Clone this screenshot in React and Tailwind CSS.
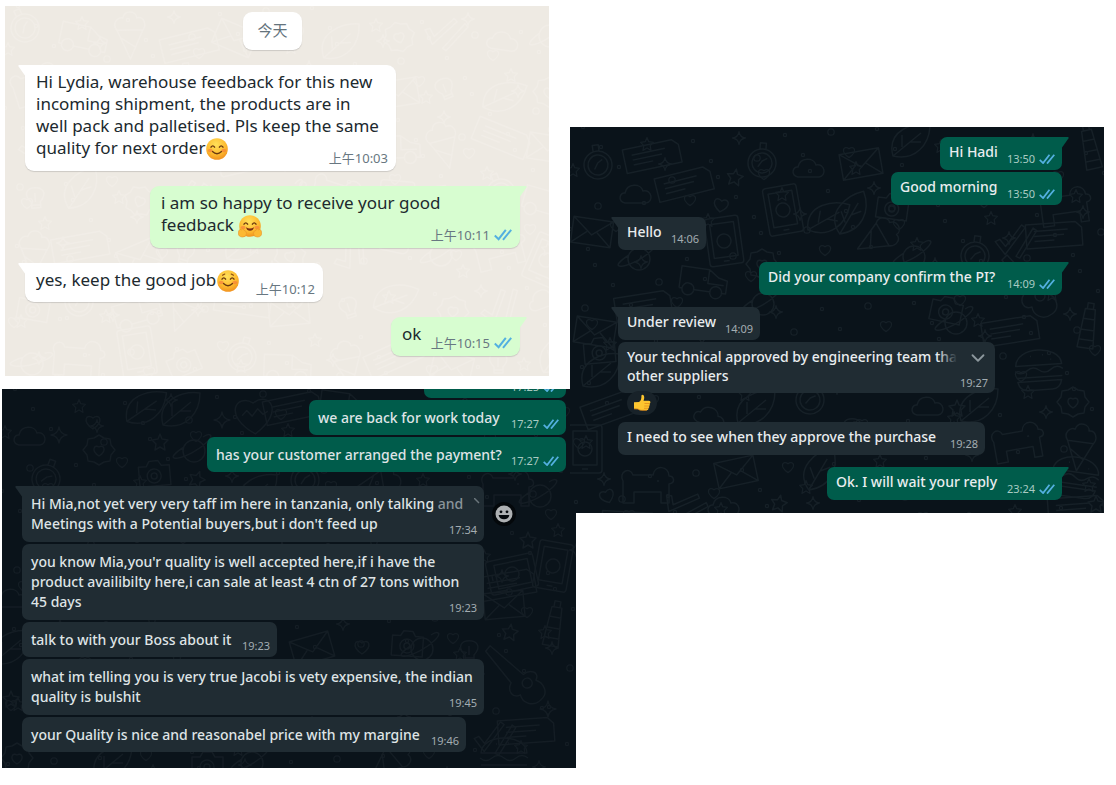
import { ChevronDown } from "lucide-react";

// Outline drawings for the chat wallpaper, each centred on 0,0
const SHAPES = {
  ring: <circle r="4" />,
  dot: <circle r="2" />,
  star: <path d="M0-8 2-3 8-2 4 2 5 8 0 5-5 8-4 2-8-2-2-3Z" />,
  spark: <path d="M0-8Q1-1 8 0 1 1 0 8-1 1-8 0-1-1 0-8Z" />,
  heart: <path d="M0 7C-12-1-6-9 0-4 6-9 12-1 0 7Z" />,
  bigHeart: <path d="M0 20C-32-1-16-22 0-11 16-22 32-1 0 20ZM-12 1l5-5 5 6 6-7 5 6 5-3" />,
  watch: <path d="M-14 0a14 14 0 1 0 28 0a14 14 0 1 0-28 0M-10 0a10 10 0 1 0 20 0a10 10 0 1 0-20 0M-3-14v-6h6v6M-4 4 0-2 5-5" />,
  note: <path d="M-28-11h50l6 6v18h-56ZM-20-4h34M-20 1h30M-20 6h20" />,
  phone: <path d="M-14-24h28q3 0 3 3v42q0 3-3 3h-28q-3 0-3-3v-42q0-3 3-3ZM-12-18h24v34h-24ZM-7 0a7 7 0 1 0 14 0a7 7 0 1 0-14 0M-3 20h6" />,
  cloud: <path d="M-12 8c-8-2-5-11 0-10C-10-12 4-12 6-4c9-2 11 11 3 12Z" />,
  gear: <path d="M0-15 5-12 11-11 12-5 16 0 12 5 11 11 5 12 0 15-5 12-11 11-12 5-16 0-12-5-11-11-5-12ZM0 6C-9 0-4-6 0-3 4-6 9 0 0 6Z" />,
  camera: <path d="M-15-8h8l3-5h9l3 5h8v20h-31ZM-7 2a7 7 0 1 0 14 0a7 7 0 1 0-14 0M-3 2a3 3 0 1 0 6 0a3 3 0 1 0-6 0" />,
  burger: <path d="M-23-5C-22-25 22-25 23-5ZM-24 0q6 5 12 0t12 0 12 0 12 0M-23 7h46M-22 11q2 9 10 9h24q8 0 10-9ZM-8-14h1M4-15h1M12-10h1" />,
  ticks: <path d="M-19 6l4-3 7 6L4-15l4 2L-7 17ZM4 17 16-14l4 2L8 18Z" />,
  truck: <path d="M-24 9v-22h28l10 7 9 2v13h-5M-10 9H8M-24 9h3M-21 9a6 6 0 1 0 12 0a6 6 0 1 0-12 0M7 9a6 6 0 1 0 12 0a6 6 0 1 0-12 0M4-13v14h16" />,
  letter: <path d="M-20-13h40v26h-40ZM-20-13 0 3 20-13M-20 13-5 0M20 13 5 0" />,
  leaf: <path d="M-17 14C-24-12 4-20 20-18 20 3 5 19-17 14ZM-17 14 11-9M-8 5v-12M0 0h11" />,
  guitar: <path d="M-30-24l5-5 30 32c7-5 17-1 12 7 7 3 12 14 3 20-9 7-19 1-20-7-8 3-13-5-8-13ZM3 12a5 5 0 1 0 10 0a5 5 0 1 0-10 0" />,
  cone: <path d="M-13-3 0 26 13-3ZM-13-3c-6-7 2-14 6-12 2-9 14-7 14 0 7-2 10 7 6 12M-9 5l14 9" />,
  planet: <path d="M-11 0a11 11 0 1 0 22 0a11 11 0 1 0-22 0M-10-4c-28 18 5 13 23-5 8-8 2-9-4-5" />,
  bulb: <path d="M-4 12v-6c-18-19 26-19 9 0v6ZM-4 9h9M0 6v-9" />,
  dog: <path d="M-24 18v-22c-5-9 7-15 10-6h20c2-11 16-9 16 1 5 0 7 7 0 8v19h-8v-11h-27v11ZM10-4h2" />,
  tower: <path d="M-8 22-5-17h10L8 22ZM-6-7H6M-7 4H7M-8 14H8M-3-17v-6h6v6" />,
};

const KINDS = ["watch", "note", "leaf", "cloud", "phone", "truck", "letter", "gear", "planet", "camera", "cone", "bulb", "ticks", "dog"];

const RIGHT_ART = [
  ["watch", 28, 38, -8], ["note", 82, 28, -12], ["note", 114, 56, -14], ["cloud", 67, 68, 0], ["star", 165, 50, 10],
  ["watch", 192, 36, 4], ["cloud", 240, 42, 0], ["phone", 213, 83, -10], ["leaf", 257, 92, 10], ["heart", 151, 78, 10],
  ["phone", 154, 114, -8], ["letter", 22, 105, 8], ["planet", 69, 132, 0], ["gear", 192, 137, 0], ["truck", 134, 155, 8],
  ["note", 73, 178, -9], ["planet", 193, 177, 0], ["letter", 291, 37, -10], ["ticks", 445, 112, 10], ["note", 484, 107, -4],
  ["leaf", 281, 88, -20], ["camera", 322, 80, 8], ["cone", 310, 109, 60], ["planet", 344, 130, 0], ["watch", 405, 129, 8],
  ["dog", 495, 79, -8], ["camera", 376, 183, 12], ["guitar", 462, 157, 0], ["planet", 386, 196, 0], ["note", 440, 203, -9],
  ["tower", 518, 199, 8], ["burger", 469, 243, -4], ["gear", 503, 275, 0], ["cone", 510, 318, 8], ["dog", 448, 315, -10],
  ["leaf", 408, 280, 0], ["cloud", 359, 280, 0], ["star", 387, 281, 0], ["letter", 25, 205, 9], ["camera", 29, 224, -5],
  ["leaf", 30, 245, 0], ["note", 40, 281, -20], ["cloud", 141, 291, 20], ["leaf", 185, 282, 0], ["watch", 240, 273, 8],
  ["dog", 77, 358, 0], ["letter", 166, 345, -12], ["leaf", 250, 344, -20], ["heart", 37, 369, -20], ["phone", 15, 322, 0],
  ["ticks", 115, 376, 40], ["cloud", 155, 380, 0], ["star", 209, 376, 12], ["bulb", 282, 300, 0], ["note", 60, 396, 3],
  ["burger", 505, 350, 8], ["note", 506, 381, -4], ["star", 526, 377, 0], ["tower", 520, 20, -12], ["leaf", 340, 15, 0],
];

const LEFT_ART = [
  ["bigHeart", 252, 25, -4], ["leaf", 143, 20, 5], ["gear", 97, 61, 0], ["camera", 152, 85, -5], ["cloud", 29, 48, 0],
  ["spark", 57, 46, 0], ["planet", 192, 62, 0], ["star", 158, 53, 0], ["watch", 44, 90, 20], ["heart", 91, 33, 0],
  ["spark", 220, 31, 0], ["star", 195, 90, 20], ["leaf", 178, 22, 0], ["note", 290, 18, -12], ["truck", 342, 17, 8],
  ["planet", 538, 107, 0], ["dog", 505, 99, 0], ["cone", 378, 95, 80], ["watch", 303, 91, 0], ["leaf", 255, 104, 0],
  ["phone", 510, 185, 78], ["phone", 551, 177, 10], ["note", 505, 195, -10], ["star", 526, 151, 0], ["letter", 502, 216, -5],
  ["letter", 310, 260, -16], ["camera", 405, 255, 4], ["planet", 420, 260, 0], ["guitar", 516, 283, -6], ["star", 508, 243, 8],
  ["note", 524, 341, -4], ["ticks", 492, 347, 10], ["burger", 502, 369, 0], ["gear", 15, 369, 0], ["leaf", 110, 374, 0],
  ["camera", 205, 376, 0], ["planet", 250, 374, 0], ["cone", 390, 370, 50], ["cloud", 11, 210, 0], ["star", 9, 310, 0],
  ["tower", 552, 235, 10], ["spark", 546, 320, 0], ["bulb", 467, 260, 0], ["heart", 360, 258, 0], ["leaf", 8, 260, 0],
];

// Evenly spread drawings for the light wallpaper
const LIGHT_ART = Array.from({ length: 77 }, (_, i) => [
  KINDS[(i * 5) % KINDS.length],
  20 + (i % 11) * 52 + ((i * 7) % 13),
  22 + Math.floor(i / 11) * 54 + ((i * 11) % 17),
  ((i * 37) % 50) - 25,
]);

const SMALL_KINDS = ["dot", "ring", "dot", "spark", "dot", "star", "dot", "heart"];

const SMALL_ART = Array.from({ length: 220 }, (_, i) => [
  SMALL_KINDS[i % 8],
  (i * 89 + 13) % 577,
  (i * 53 + Math.floor(i / 7) * 17) % 391,
]);

function Wallpaper({ art, className }) {
  return (
    <svg
      aria-hidden="true"
      className={`absolute inset-0 h-full w-full ${className}`}
      fill="none"
      stroke="currentColor"
      strokeLinejoin="round"
    >
      {art.map(([kind, x, y, turn], i) => (
        <g key={i} transform={`translate(${x} ${y}) rotate(${turn})`} strokeWidth="1.5">
          {SHAPES[kind]}
        </g>
      ))}
      {SMALL_ART.map(([kind, x, y], i) => (
        <g key={i} transform={`translate(${x} ${y}) scale(.8)`} strokeWidth="1.6">
          {SHAPES[kind]}
        </g>
      ))}
    </svg>
  );
}

function Ticks({ className = "w-4" }) {
  return (
    <svg viewBox="0 0 18 12" className={`shrink-0 ${className}`} fill="none" stroke="#53b0e0" strokeWidth="2" aria-label="Read">
      <path d="M.8 6.6 4.6 10.2 11.8.8M9 10.8 17.2.8" />
    </svg>
  );
}

function Face({ kind }) {
  return (
    <svg viewBox="0 0 24 24" className="-my-1 inline-block size-6 align-middle" aria-label={kind}>
      <defs>
        <radialGradient id={`face-${kind}`} cx="45%" cy="30%" r="75%">
          <stop offset="0" stopColor="#ffe15a" />
          <stop offset=".6" stopColor="#fdbb30" />
          <stop offset="1" stopColor="#ef8a1c" />
        </radialGradient>
      </defs>
      <circle cx="12" cy="12" r="10.8" fill={`url(#face-${kind})`} />
      <g fill="none" stroke="#6b3a10" strokeWidth="1.4" strokeLinecap="round">
        <path d="M6 10.2q1.8-2.6 3.6 0M14.4 10.2q1.8-2.6 3.6 0" />
        {kind !== "hugging" && <path d="M7.5 14.6q4.5 4.4 9 0" />}
      </g>
      <g fill="#f5713d" opacity=".55">
        <ellipse cx="5.2" cy="13.5" rx="2.4" ry="1.7" />
        <ellipse cx="18.8" cy="13.5" rx="2.4" ry="1.7" />
      </g>
      {kind === "relaxed" && (
        <path d="M6.5 6.2 8.8 5M17.5 6.2 15.2 5" stroke="#8a4b12" strokeWidth="1.1" strokeLinecap="round" />
      )}
      {kind === "hugging" && (
        <>
          <path d="M8 13.2q4 2.8 8 0-.8 3.6-4 3.6t-4-3.6Z" fill="#7a2d12" />
          <path d="M1 16.5q1-2 2.4-.6l1-.9q1.6-.4 1.5 1.2 2.6.6 2.6 3.2 0 3.6-3.8 3.6-4.4 0-4.4-4 0-1.4.7-2.5ZM23 16.5q-1-2-2.4-.6l-1-.9q-1.6-.4-1.5 1.2-2.6.6-2.6 3.2 0 3.6 3.8 3.6 4.4 0 4.4-4 0-1.4-.7-2.5Z" fill="#fcb832" stroke="#e8922a" strokeWidth=".6" />
        </>
      )}
    </svg>
  );
}

function ThumbsUp() {
  return (
    <svg viewBox="0 0 18 18" className="size-[18px]" aria-label="thumbs up">
      <path d="M1 8.2 6 8C8 6.6 8.6 4.4 8.4 1.4 9.4.2 11 .9 11.2 3c.1 1.6-.3 2.8-.7 3.8H16q1.6.2 1.4 1.6-.1 1-.9 1.3 1 1.5-.4 2.4.6 1.5-.7 2.2.2 1.8-1.5 2H8.5Q6.5 16.3 5 15L1 14.8Z" fill="#fdc52f" />
      <path d="M11.5 9.5h5M11.3 12h4.9M11 14.3h4.3M1 14.8l4 .2q1.5 1.3 3.5 1.3h5.4" fill="none" stroke="#e08c1b" strokeWidth=".8" />
    </svg>
  );
}

function Tail({ out }) {
  return (
    <svg
      viewBox="0 0 8 13"
      className={`absolute top-0 h-[13px] w-2 ${out ? "-right-[7px] -scale-x-100" : "-left-[7px]"}`}
      fill="currentColor"
      aria-hidden="true"
    >
      <path d="M8 0H1.2Q-.2.3.6 1.6L8 12Z" />
    </svg>
  );
}

const TONES = {
  light: {
    in: "bg-white text-white",
    out: "bg-[#d7fdd0] text-[#d7fdd0]",
    body: "text-[#20292e] text-[17px] leading-[22px]",
    pad: "px-[11px] pt-[6px] rounded-[9px] shadow-[0_1px_1px_rgba(11,20,26,0.15)]",
    one: "pb-[11px]",
    time: "text-[13px] leading-4 -mr-[3px]",
    low: "-mb-[6px]",
    under: "-mt-[9px] self-end",
    ticks: "w-[18px]",
    timeIn: "text-[#687781]",
    timeOut: "text-[#687781]",
  },
  right: {
    in: "bg-[#202c33] text-[#202c33]",
    out: "bg-[#005c4b] text-[#005c4b]",
    body: "text-[#e9edef] text-[14px] leading-[19px] font-medium",
    pad: "px-[9px] pt-[5px] rounded-[7px]",
    one: "pb-[9px]",
    time: "text-[11px] leading-4 -mr-[2px]",
    low: "-mb-[6px]",
    under: "-mt-[10px] self-end",
    ticks: "w-4",
    timeIn: "text-[#a3adb2]",
    timeOut: "text-[#a9cbc3]",
  },
  left: {
    in: "bg-[#202c33] text-[#202c33]",
    out: "bg-[#005c4b] text-[#005c4b]",
    body: "text-[#dfe4e6] text-[14px] leading-[20px] font-medium",
    pad: "px-[9px] pt-[8px] rounded-[7px]",
    one: "pb-[7px]",
    time: "text-[11px] leading-4 -mr-[2px]",
    low: "-mb-[4px]",
    under: "-mt-3 self-end",
    ticks: "w-4",
    timeIn: "text-[#a3adb2]",
    timeOut: "text-[#a9cbc3]",
  },
};

function Bubble({ tone, out, tail, lines, time, className = "", children }) {
  const t = TONES[tone];
  const many = lines.length > 1;
  return (
    <div
      className={`relative flex ${many ? "flex-col" : "items-end justify-between"} ${out ? "self-end" : "self-start"} ${
        out ? t.out : t.in
      } ${t.pad} ${many ? "" : t.one} ${tail ? (out ? "rounded-tr-none" : "rounded-tl-none") : ""} ${className}`}
    >
      {tail && <Tail out={out} />}
      <p className={`whitespace-nowrap ${t.body}`}>
        {lines.map((line, i) => (
          <span key={i} className="block">
            {line}
          </span>
        ))}
      </p>
      <span className={`flex items-center gap-1 whitespace-nowrap ${t.time} ${many ? t.under : t.low}`}>
        <time className={out ? t.timeOut : t.timeIn}>{time}</time>
        {out && <Ticks className={t.ticks} />}
      </span>
      {children}
    </div>
  );
}

function LightChat() {
  return (
    <section className="relative ml-[3px] mr-[27px] flex flex-col overflow-hidden bg-[#eeeae3] pb-5 pl-5 pr-[29px] pt-[6px]">
      <Wallpaper art={LIGHT_ART} className="text-[#f1ede7]" />
      <div className="relative mb-[15px] self-center rounded-[9px] bg-white px-[14px] pb-2 pt-[6px] text-[15px] leading-6 text-[#64737c] shadow-[0_1px_1px_rgba(11,20,26,0.15)]">
        今天
      </div>
      <Bubble
        tone="light"
        tail
        className="mb-[15px] h-[106px] w-[371px]"
        time="上午10:03"
        lines={[
          "Hi Lydia, warehouse feedback for this new",
          "incoming shipment, the products are in",
          "well pack and palletised. Pls keep the same",
          <>quality for next order<Face kind="smiling" /></>,
        ]}
      />
      <Bubble
        tone="light"
        out
        tail
        className="mb-[15px] h-[62px] w-[370px]"
        time="上午10:11"
        lines={["i am so happy to receive your good", <>feedback <Face kind="hugging" /></>]}
      />
      <Bubble
        tone="light"
        tail
        className="mb-[15px] w-[298px]"
        time="上午10:12"
        lines={[<>yes, keep the good job<Face kind="relaxed" /></>]}
      />
      <Bubble tone="light" out tail className="w-[129px]" time="上午10:15" lines={["ok"]} />
    </section>
  );
}

function LeftChat() {
  return (
    <section className="relative flex flex-col gap-[2px] overflow-hidden bg-[#0a131a] pb-4 pl-5 pr-[10px]">
      <Wallpaper art={LEFT_ART} className="text-[#141d24]" />
      <div className="relative h-[9px] w-[142px] self-end overflow-hidden rounded-b-[7px] bg-[#005c4b]">
        <span className="absolute bottom-[5px] right-[7px] flex items-center gap-1 text-[11px] leading-3 text-[#a9cbc3]">
          17:25 <Ticks />
        </span>
      </div>
      <Bubble tone="left" out className="w-[257px]" time="17:27" lines={["we are back for work today"]} />
      <Bubble tone="left" out className="mb-3 w-[359px]" time="17:27" lines={["has your customer arranged the payment?"]} />
      <div className="relative flex items-center gap-2">
        <Bubble
          tone="left"
          tail
          className="h-[56px] w-[462px]"
          time="17:34"
          lines={[
            <>Hi Mia,not yet very very taff im here in tanzania, only talking <span className="text-[#8b959b]">and</span></>,
            "Meetings with a Potential buyers,but i don't feed up",
          ]}
        >
          <svg viewBox="0 0 6 6" className="absolute right-[4px] top-3 size-[6px]" aria-hidden="true">
            <path d="M0 0 5 5" stroke="#6b767c" strokeWidth="1.5" />
          </svg>
        </Bubble>
        <button type="button" aria-label="React" className="flex size-6 items-center justify-center rounded-full bg-[#04080b]">
          <svg viewBox="0 0 18 18" className="size-[18px]">
            <circle cx="9" cy="9" r="8.5" fill="#aeb1b3" />
            <circle cx="6" cy="6.8" r="1.4" fill="#04080b" />
            <circle cx="12" cy="6.8" r="1.4" fill="#04080b" />
            <path d="M3.6 10h10.8q-1 4.3-5.4 4.3t-5.4-4.3Z" fill="#04080b" />
          </svg>
        </button>
      </div>
      <Bubble
        tone="left"
        className="h-[76px] w-[462px]"
        time="19:23"
        lines={[
          "you know Mia,you'r quality is well accepted here,if i have the",
          "product availibilty here,i can sale at least 4 ctn of 27 tons withon",
          "45 days",
        ]}
      />
      <Bubble tone="left" className="w-[255px]" time="19:23" lines={["talk to with your Boss about it"]} />
      <Bubble
        tone="left"
        className="h-[56px] w-[462px]"
        time="19:45"
        lines={["what im telling you is very true Jacobi is vety expensive, the indian", "quality is bulshit"]}
      />
      <Bubble tone="left" className="w-[444px]" time="19:46" lines={["your Quality is nice and reasonabel price with my margine"]} />
    </section>
  );
}

function RightChat() {
  return (
    <section className="relative mt-[121px] -ml-[6px] flex flex-col gap-[2px] self-start overflow-hidden bg-[#0a131a] pb-[13px] pl-12 pr-[42px] pt-[10px]">
      <Wallpaper art={RIGHT_ART} className="text-[#162027]" />
      <Bubble tone="right" out tail className="w-[122px]" time="13:50" lines={["Hi Hadi"]} />
      <Bubble tone="right" out className="mb-[10px] w-[171px]" time="13:50" lines={["Good morning"]} />
      <Bubble tone="right" tail className="mb-[10px] w-[88px]" time="14:06" lines={["Hello"]} />
      <Bubble tone="right" out tail className="mb-[10px] w-[303px]" time="14:09" lines={["Did your company confirm the PI?"]} />
      <Bubble tone="right" tail className="w-[142px]" time="14:09" lines={["Under review"]} />
      <Bubble
        tone="right"
        className="h-[51px] w-[377px]"
        time="19:27"
        lines={["Your technical approved by engineering team tha", "other suppliers"]}
      >
        <button
          type="button"
          aria-label="Message menu"
          className="absolute right-0 top-1 flex h-6 w-[58px] items-center justify-end rounded-tr-[7px] bg-linear-to-r from-transparent to-[#202c33] to-35% pr-[6px] text-[#8c979d]"
        >
          <ChevronDown size={22} strokeWidth={2} />
        </button>
      </Bubble>
      <button
        type="button"
        aria-label="Reactions"
        className="relative -mt-1 mb-[5px] ml-[9px] flex h-6 w-[30px] items-center justify-center self-start rounded-full bg-[#182229]"
      >
        <ThumbsUp />
      </button>
      <Bubble tone="right" className="mb-[10px] w-[367px]" time="19:28" lines={["I need to see when they approve the purchase"]} />
      <Bubble tone="right" out tail className="w-[235px]" time="23:24" lines={["Ok. I will wait your reply"]} />
    </section>
  );
}

export default function App() {
  return (
    <main className="grid min-h-screen grid-cols-[574fr_528fr] items-start bg-white pb-4 pl-[2px] pr-3 pt-[6px] font-['Noto_Sans','Noto_Sans_CJK_SC',sans-serif]">
      <div className="flex flex-col gap-[13px]">
        <LightChat />
        <LeftChat />
      </div>
      <RightChat />
    </main>
  );
}
